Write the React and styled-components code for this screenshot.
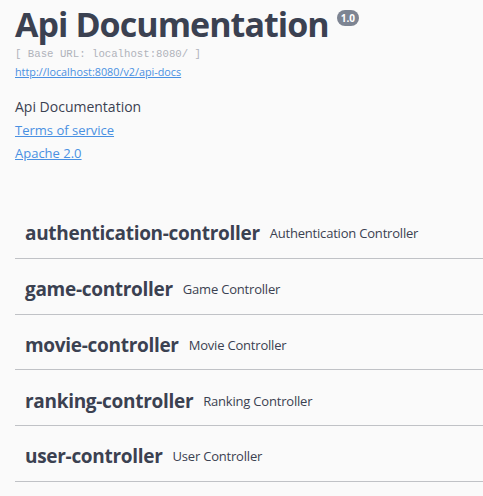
import React from 'react'
import styled, { createGlobalStyle } from 'styled-components'

const GlobalStyle = createGlobalStyle`
  html, body {
    margin: 0;
    padding: 0;
    background: #fafafa;
  }
  body {
    font-family: "Open Sans", sans-serif;
    color: #3b4151;
  }
`

const tags = [
  { name: 'authentication-controller', description: 'Authentication Controller' },
  { name: 'game-controller', description: 'Game Controller' },
  { name: 'movie-controller', description: 'Movie Controller' },
  { name: 'ranking-controller', description: 'Ranking Controller' },
  { name: 'user-controller', description: 'User Controller' },
]

function App() {
  return (
    <Wrapper>
      <GlobalStyle />
      <Info>
        <Title>
          Api Documentation
          <Version>1.0</Version>
        </Title>
        <BaseUrl>[ Base URL: localhost:8080/ ]</BaseUrl>
        <SpecLink href="#">http://localhost:8080/v2/api-docs</SpecLink>
        <Description>Api Documentation</Description>
        <InfoLink href="#">Terms of service</InfoLink>
        <InfoLink href="#">Apache 2.0</InfoLink>
      </Info>

      <Tags>
        {tags.map((tag) => (
          <TagRow key={tag.name}>
            <TagName>{tag.name}</TagName>
            <TagDescription>{tag.description}</TagDescription>
          </TagRow>
        ))}
      </Tags>
    </Wrapper>
  )
}

export default App

const Wrapper = styled.div`
  padding: 2px 0 0 15px;
`

const Info = styled.div`
  display: flex;
  flex-direction: column;
  align-items: flex-start;
`

const Title = styled.h2`
  margin: 0;
  font-size: 34px;
  font-weight: 700;
  line-height: 44px;
  letter-spacing: -0.95px;
  display: flex;
  align-items: flex-start;
`

const Version = styled.small`
  margin: 8px 0 0 8px;
  padding: 0 4px;
  border-radius: 57px;
  background: #7d8492;
  color: #fff;
  font-size: 10px;
  font-weight: 700;
  letter-spacing: 0;
  line-height: 16px;
`

const BaseUrl = styled.pre`
  margin: 0;
  font-family: "Liberation Mono", monospace;
  font-size: 10.7px;
  line-height: 16px;
  color: #b0b3ba;
`

const SpecLink = styled.a`
  font-size: 10.8px;
  line-height: 20px;
  color: #4990e2;
`

const Description = styled.p`
  margin: 15px 0 2px;
  font-size: 14px;
  line-height: 20px;
`

const InfoLink = styled.a`
  font-size: 13px;
  line-height: 23px;
  color: #4990e2;
`

const Tags = styled.div`
  margin-top: 38px;
`

const TagRow = styled.div`
  display: flex;
  align-items: center;
  padding: 13px 20px 7px 10px;
  height: 34.75px;
  border-bottom: 1px solid rgba(59, 65, 81, 0.3);
`

const TagName = styled.span`
  font-size: 19px;
  font-weight: 700;
  letter-spacing: -0.3px;
`

const TagDescription = styled.small`
  margin-left: 10px;
  font-size: 13px;
  letter-spacing: -0.2px;
`
